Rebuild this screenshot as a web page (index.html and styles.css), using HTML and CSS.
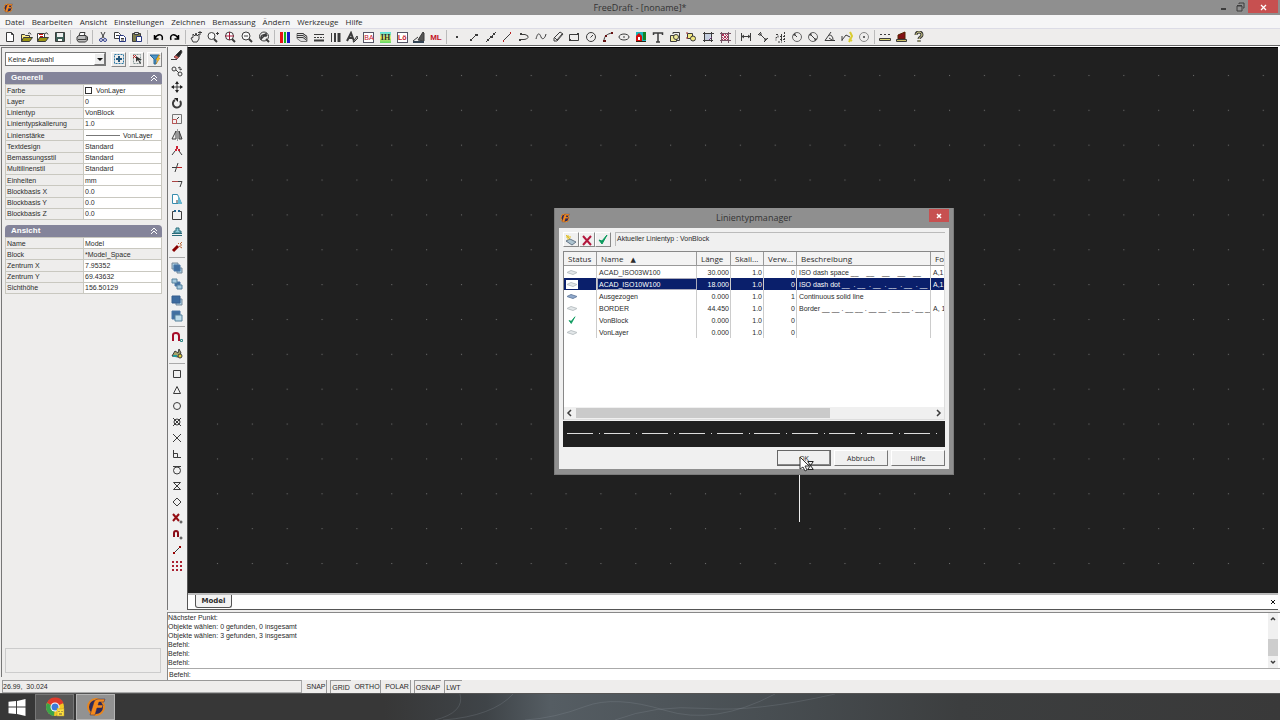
FILE: index.html
```html
<!DOCTYPE html>
<html lang="de">
<head>
<meta charset="utf-8">
<title>FreeDraft - [noname]*</title>
<link rel="stylesheet" href="styles.css">
</head>
<body>
<svg class="defs" aria-hidden="true">
  <symbol id="logo" viewBox="0 0 20 20"><circle cx="10" cy="10" r="8" fill="#2c2a5c" stroke="#e8861c" stroke-width="2"/><path d="M4 18L8 5q1-3 4-3h7l-1 3h-5l-1 3h5l-1 3h-5l-2 7z" fill="#f58a1c" stroke="#2c2a5c" stroke-width=".5"/></symbol>
  <symbol id="layer" viewBox="0 0 12 8"><path d="M1 4l4-2 6 2-4 2z" fill="#e3e7e9" stroke="#bcc3c6"/></symbol>
  <symbol id="layer-used" viewBox="0 0 12 8"><path d="M1 4l4-2 6 2-4 2z" fill="#8fa9cc" stroke="#6d84a5"/></symbol>
  <symbol id="tick" viewBox="0 0 12 12"><path d="M2 6l3 4 5-9-5 6z" fill="#0a9a5c" stroke="#0a9a5c"/></symbol>
  <symbol id="fold" viewBox="0 0 8 8"><path d="M1 4l3-3 3 3M1 7l3-3 3 3" fill="none" stroke="#fff"/></symbol>
</svg>

<header class="titlebar">
  <svg class="app-icon"><use href="#logo"/></svg>
  <h1>FreeDraft - [noname]*</h1>
  <div class="window-buttons">
    <button aria-label="Minimieren"><svg class="i" viewBox="0 0 12 12"><path d="M4 8h5" stroke-width="2"/></svg></button>
    <button aria-label="Wiederherstellen"><svg class="i" viewBox="0 0 12 12"><path d="M3 5h5v5H3zM3 4.500h5M5 3V2h5v5H9"/></svg></button>
    <button class="close" aria-label="Schließen"><svg class="i" viewBox="0 0 12 12"><path d="M4 4l5 5M9 4L4 9" stroke="#fff" stroke-width="1.300"/></svg></button>
  </div>
</header>

<nav class="menubar">
  <button>Datei</button><button>Bearbeiten</button><button>Ansicht</button><button>Einstellungen</button><button>Zeichnen</button><button>Bemassung</button><button>Ändern</button><button>Werkzeuge</button><button>Hilfe</button>
</nav>

<div class="toolbar" role="toolbar" aria-label="Werkzeugleiste">
  <div class="group file">
    <button aria-label="Neu"><svg class="i" viewBox="0 0 12 12"><path d="M2.500 1.500h5l2 2v7h-7zM7.500 1.500v2h2" fill="#fff"/></svg></button>
    <button aria-label="Öffnen"><svg class="i" viewBox="0 0 12 12"><path d="M.5 10.500v-7h3l1 1h4v2" fill="#ffef8a"/><path d="M.5 10.500l2-4h9l-3 4z" fill="#9a9412"/><path d="M7 2.500q2-2 3 1"/></svg></button>
    <button aria-label="Import"><svg class="i" viewBox="0 0 12 12"><path d="M.5 10.500v-8h7v4" fill="#fff"/><path d="M.5 10.500l2-4h9l-3 4z" fill="#9a9412"/><path d="M2 3.500h4M3 5.500h3" stroke="#c11"/><path d="M8 2.500q2-2 3 1"/></svg></button>
    <button aria-label="Speichern"><svg class="i" viewBox="0 0 12 12"><path d="M1.500 1.500h9v9h-9z" fill="#3e5f57"/><path d="M3 2h6v4H3z" fill="#eee" stroke="none"/><path d="M4 8h4v2H4z" fill="#fff" stroke="none"/></svg></button>
  </div>
  <div class="group one">
    <button aria-label="Drucken"><svg class="i" viewBox="0 0 12 12"><path d="M3 5l1-3.500h5L8 5" fill="#fff"/><path d="M1 8V6l2-1.500h7L11.500 6v3l-2 2h-7L1 9z" fill="#bbb"/><path d="M2 8.500h8M10 5v4"/></svg></button>
  </div>
  <div class="group three">
    <button aria-label="Ausschneiden"><svg class="i" viewBox="0 0 12 12"><path d="M4 1l3 6M8 1L5 7"/><g stroke="#33408f"><circle cx="4" cy="9" r="1.500"/><circle cx="8" cy="9" r="1.500"/></g></svg></button>
    <button aria-label="Kopieren"><svg class="i" viewBox="0 0 12 12"><path d="M.5 1.500h4l2 2v4h-6z" fill="#fff"/><path d="M5.500 4.500h4l2 2v4h-6z" fill="#fff" stroke="#26357f"/><path d="M2 4.500h3M7 7.500h3M7 9h3"/></svg></button>
    <button aria-label="Einfügen"><svg class="i" viewBox="0 0 12 12"><path d="M1.500 2.500h8v8h-8z" fill="#7e7c49"/><path d="M3.500 1.500h4v2h-4z" fill="#ddd"/><path d="M5.500 5.500h5v5h-5z" fill="#fff" stroke="#26357f"/></svg></button>
  </div>
  <div class="group two">
    <button aria-label="Rückgängig"><svg class="i" viewBox="0 0 12 12"><path d="M3 7c3-5 9-4 7 2M2.500 4v4h4" stroke="#000" stroke-width="1.500"/></svg></button>
    <button aria-label="Wiederholen"><svg class="i" viewBox="0 0 12 12"><path d="M9 7C6 2 0 3 2 9M9.500 4v4h-4" stroke="#000" stroke-width="1.500"/></svg></button>
  </div>
  <div class="group five">
    <button aria-label="Pan"><svg class="i" viewBox="0 0 12 12"><path d="M3 11L1 7l2-.5V3l2 2 1-3 1 3 2-2v5l-2 3zM8 1.500h4M10 0v4"/></svg></button>
    <button aria-label="Zoom"><svg class="i" viewBox="0 0 12 12"><circle cx="4.500" cy="5" r="3.500" fill="#f8f8f8"/><path d="M7 8l3 3" stroke-width="2"/><path d="M9 2.500h3M10.500 1v3"/></svg></button>
    <button aria-label="Zoom plus"><svg class="i" viewBox="0 0 12 12"><circle cx="5.500" cy="5" r="4" fill="#fff"/><path d="M8 8l3 3" stroke-width="2"/><path d="M1 5h9M5.500 1v8" stroke="#a11938"/></svg></button>
    <button aria-label="Zoom minus"><svg class="i" viewBox="0 0 12 12"><circle cx="5" cy="5" r="4" fill="#f8f8f8"/><path d="M8 8l3 3" stroke-width="2"/><path d="M3 5h4"/></svg></button>
    <button aria-label="Zoom alles"><svg class="i" viewBox="0 0 12 12"><circle cx="6" cy="5.500" r="4.500"/><path d="M8 8l3 3" stroke-width="2"/><path d="M3 9V6c1-3 5-3 6-1M3 8l3-3M8 2v3H5" stroke-width="1.500"/></svg></button>
  </div>
  <div class="group ten">
    <button aria-label="Farbe"><svg class="i" viewBox="0 0 12 12"><path d="M2.500 1v11" stroke="#e81212" stroke-width="3"/><path d="M6 1v11" stroke="#17b317" stroke-width="2"/><path d="M9.500 1v11" stroke="#1818c8" stroke-width="3"/></svg></button>
    <button aria-label="Layer"><svg class="i" viewBox="0 0 12 12"><path d="M1 2.500h6l4 3v5H5l-4-3z" fill="#ddd" stroke="#777"/><path d="M1 2.500h6l4 3M1 4.500h6l4 3M1 6.500h6l4 3"/></svg></button>
    <button aria-label="Linientyp"><svg class="i" viewBox="0 0 12 12"><path d="M1 3.500h10"/><path d="M1 6.500h10" stroke-dasharray="2 1"/><path d="M1 9.500h10" stroke-width="2"/></svg></button>
    <button aria-label="Linienstärke"><svg class="i" viewBox="0 0 12 12"><path d="M2.500 2v9"/><path d="M6 2v9" stroke-width="2"/><path d="M10 2v9" stroke-width="3"/></svg></button>
    <button aria-label="Textstil"><svg class="i" viewBox="0 0 12 12"><path d="M1 10l4-8 3 8M3 7h4" stroke-width="2"/><path d="M7 11l4-6 1 2-4 4z" fill="#bbb"/></svg></button>
    <button class="letter" aria-label="Bemassungsstil"><span class="red boxed">BA</span></button>
    <button class="letter" aria-label="Inhalt"><span class="rainbow">IH</span></button>
    <button class="letter" aria-label="Löschen"><span class="red boxed bold">Lö</span></button>
    <button aria-label="Schnellauswahl"><svg class="i" viewBox="0 0 12 12"><path d="M0 10l5-4M5 9l5-8 1 1v8z" fill="#555"/><path d="M0 11h11" stroke-width="2" stroke="#345"/></svg></button>
    <button class="letter" aria-label="Multilinie"><span class="red large">ML</span></button>
  </div>
  <div class="group draw">
    <button aria-label="Punkt"><svg class="i" viewBox="0 0 12 12"><path d="M5 6h2" stroke-width="2"/></svg></button>
    <button aria-label="Linie"><svg class="i" viewBox="0 0 12 12"><path d="M2 10l7-7"/><path d="M2 9h2M7 4h3" stroke-width="2"/></svg></button>
    <button aria-label="Strahl"><svg class="i" viewBox="0 0 12 12"><path d="M1 11L11 1"/><path d="M2 9h2M5 6h3M8 3h2" stroke-width="2"/></svg></button>
    <button aria-label="Konstruktionslinie"><svg class="i" viewBox="0 0 12 12"><path d="M2 10l8-8"/><path d="M2 10h1M9 2h1" stroke="#b22" stroke-width="2"/></svg></button>
    <button aria-label="Polylinie"><svg class="i" viewBox="0 0 12 12"><path d="M2 3.500h5q4 1 3 3t-4 2H1"/><path d="M1 9h2M2 3h2" stroke-width="2"/></svg></button>
    <button aria-label="Spline"><svg class="i" viewBox="0 0 12 12"><path d="M1 8c2-8 4-5 5-2s4 2 5-3"/></svg></button>
    <button aria-label="Bleistift"><svg class="i" viewBox="0 0 12 12"><path d="M2 10V7l6-6 3 2-6 7zM3 7l2 2 5-6"/></svg></button>
    <button aria-label="Rechteck"><svg class="i" viewBox="0 0 12 12"><path d="M1.500 3.500h9v6h-9z"/><path d="M1 9h2M9 3h2" stroke-width="2"/></svg></button>
    <button aria-label="Kreis"><svg class="i" viewBox="0 0 12 12"><circle cx="6" cy="6" r="4.500"/><path d="M5.500 6.500L8 4"/></svg></button>
    <button aria-label="Bogen"><svg class="i" viewBox="0 0 12 12"><path d="M2 10c0-5 3-7 8-8"/><path d="M1 10h3M3 5h2M9 2h2" stroke="#611" stroke-width="2"/></svg></button>
    <button aria-label="Ellipse"><svg class="i" viewBox="0 0 12 12"><ellipse cx="6" cy="6" rx="5" ry="3"/><path d="M5 6h2"/></svg></button>
    <button aria-label="Bild"><svg class="i" viewBox="0 0 12 12"><g stroke="none"><path d="M1 1h10v10H1z" fill="#18b8bd"/><path d="M1 10V5l3-3 3 3v5z" fill="#d40c0c"/><path d="M3 6h2v3H3z" fill="#fff"/><path d="M8 1h3v8H8z" fill="#128526"/><path d="M1 10h10v1H1z" fill="#321"/></g></svg></button>
    <button aria-label="Text"><svg class="i" viewBox="0 0 12 12"><path d="M1.500 4V2h9v2M6 2v9M4 11h4" stroke-width="1.500"/></svg></button>
    <button aria-label="Block einfügen"><svg class="i" viewBox="0 0 12 12"><path d="M1.500 4.500h6v6h-6z" fill="#efe999"/><path d="M4 3V1.500h6.500v8H8"/><circle cx="7" cy="6" r="2.500" fill="#efe999"/></svg></button>
    <button aria-label="Block"><svg class="i" viewBox="0 0 12 12"><path d="M2.500 2.500h5v5h-5z" fill="#f3e982"/><circle cx="8" cy="7.500" r="2.500" fill="#f3e982"/><path d="M1 2h2M1 7h2" stroke="#a33"/></svg></button>
    <button aria-label="Begrenzung"><svg class="i" viewBox="0 0 12 12"><path d="M3 3h6l-1 6H3z" fill="#c4cee0" stroke="none"/><path d="M2.500 1v10M9.500 1v10M1 2.500h11M1 9.500h10"/><path d="M7 9l3-3" stroke="#637"/></svg></button>
    <button aria-label="Schraffur"><svg class="i" viewBox="0 0 12 12"><path d="M2.500 1v11M9.500 1v11M1 2.500h11M1 9.500h11" stroke="#756"/><path d="M3 5l2-2M3 9l6-6M6 9l3-3M3 6l3 3M3 3l6 6M6 3l3 3" stroke="#b3355c"/></svg></button>
  </div>
  <div class="group eight">
    <button aria-label="Linear"><svg class="i" viewBox="0 0 12 12"><path d="M1.500 2v8M10.500 2v8M2 5.500h8M4 4L2 5.500 4 7M8 4l2 1.500L8 7"/></svg></button>
    <button aria-label="Ausgerichtet"><svg class="i" viewBox="0 0 12 12"><path d="M1 4l3-3M3 3l6 6M3 5V3h2M7 9h2V7M7 11l4-4"/></svg></button>
    <button aria-label="Koordinate"><svg class="i" viewBox="0 0 12 12"><path d="M2 3.500h2v3H2v3M6 5.500h6M6 8.500h6M7.500 3v7M10.500 1v10M4 11h4" stroke-dasharray="2 1"/></svg></button>
    <button aria-label="Radius"><svg class="i" viewBox="0 0 12 12"><circle cx="6" cy="6" r="4.500" stroke="#666"/><path d="M6 6L3 3M3 5V3h2"/></svg></button>
    <button aria-label="Durchmesser"><svg class="i" viewBox="0 0 12 12"><circle cx="6" cy="6" r="4.500" stroke="#666"/><path d="M3 3l6 6M3 5V3h2M9 7v2H7"/></svg></button>
    <button aria-label="Winkel"><svg class="i" viewBox="0 0 12 12"><path d="M7 1L1 9.500h10M5 4q4 0 4 5M5 7l3 2"/></svg></button>
    <button aria-label="Führung"><svg class="i" viewBox="0 0 12 12"><path d="M1 5v5M1 9l4-5 4 2"/><path d="M9 1l2 4-3 6M8 8l3 2" stroke="#d9cc31" stroke-width="2"/></svg></button>
    <button aria-label="Mittelpunkt"><svg class="i" viewBox="0 0 12 12"><circle cx="6" cy="6" r="4.500" stroke="#888"/><path d="M5 6h2M6 5v2"/></svg></button>
  </div>
  <div class="group last">
    <button aria-label="Abstand"><svg class="i" viewBox="0 0 12 12"><path d="M1 3.500h10" stroke-dasharray="2 2"/><path d="M.5 7.500h11v2H.5z" fill="#d9d46e"/></svg></button>
    <button aria-label="Fläche"><svg class="i" viewBox="0 0 12 12"><path d="M2 8V4l7-3v7z" fill="#820f16" stroke="#520"/><path d="M.5 8.500h10v2H.5z" fill="#cdc16b"/></svg></button>
    <button aria-label="Hilfe"><svg class="i" viewBox="0 0 12 12"><path d="M3 4c0-4 6-4 6 0 0 2-3 2-3 4M6 9v2" stroke-width="3"/><path d="M3 4c0-4 6-4 6 0 0 2-3 2-3 4M6 9v2" stroke="#ddd98f"/></svg></button>
  </div>
</div>

<main class="main">
  <aside class="properties">
    <div class="selection">
      <label class="combo"><select aria-label="Auswahl"><option>Keine Auswahl</option></select><span class="arrow"></span></label>
      <button class="raised" aria-label="Auswählen"><svg class="i" viewBox="0 0 12 12"><path d="M1.500 1.500h9v9h-9z" stroke="#2a77a5" stroke-dasharray="2 1"/><path d="M3 6h6M6 3v6" stroke-width="2" stroke="#25587d"/></svg></button>
      <button class="raised" aria-label="Abwählen"><svg class="i" viewBox="0 0 12 12"><path d="M2.500 1.500h7v9h-7z" stroke="#899" stroke-dasharray="2 1"/><path d="M2 2l3 3M5 2L2 5" stroke="#b22"/><path d="M5 3v6l2-2 2 4 1-1-2-3h3z" fill="#333" stroke="none"/></svg></button>
      <button class="raised" aria-label="Filter"><svg class="i" viewBox="0 0 12 12"><path d="M1 2h9L7 6v5H5V6z" fill="#4a96c8" stroke="#2b6696"/><path d="M10 2L7 7h2l-2 4 4-6H9l2-3z" fill="#ffca24" stroke="#bc8112" stroke-width=".5"/></svg></button>
    </div>
    <section class="general">
      <h2>Generell<svg><use href="#fold"/></svg></h2>
      <table>
        <tr><th>Farbe</th><td><span class="swatch"></span>VonLayer</td></tr>
        <tr><th>Layer</th><td>0</td></tr>
        <tr><th>Linientyp</th><td>VonBlock</td></tr>
        <tr><th>Linientypskalierung</th><td>1.0</td></tr>
        <tr><th>Linienstärke</th><td><span class="weight"></span>VonLayer</td></tr>
        <tr><th>Textdesign</th><td>Standard</td></tr>
        <tr><th>Bemassungsstil</th><td>Standard</td></tr>
        <tr><th>Multilinenstil</th><td>Standard</td></tr>
        <tr><th>Einheiten</th><td>mm</td></tr>
        <tr><th>Blockbasis X</th><td>0.0</td></tr>
        <tr><th>Blockbasis Y</th><td>0.0</td></tr>
        <tr><th>Blockbasis Z</th><td>0.0</td></tr>
      </table>
    </section>
    <section class="view">
      <h2>Ansicht<svg><use href="#fold"/></svg></h2>
      <table>
        <tr><th>Name</th><td>Model</td></tr>
        <tr><th>Block</th><td class="locked">*Model_Space</td></tr>
        <tr><th>Zentrum X</th><td>7.95352</td></tr>
        <tr><th>Zentrum Y</th><td>69.43632</td></tr>
        <tr><th>Sichthöhe</th><td>156.50129</td></tr>
      </table>
    </section>
    <div class="hint"></div>
  </aside>

  <div class="right">
    <div class="upper">
      <div class="strip" role="toolbar" aria-label="Ändern">
        <div class="vgroup">
          <button aria-label="Löschen"><svg class="i" viewBox="0 0 12 12"><path d="M0 10.500h6"/><path d="M3 8l2-2 3 2-2 2z" fill="#c65" stroke="#845"/><path d="M5 6l5-5 1 2-3 5z" fill="#222"/></svg></button>
          <button aria-label="Kopieren"><svg class="i" viewBox="0 0 12 12"><circle cx="3" cy="4" r="2"/><circle cx="9" cy="9" r="2"/><path d="M5 5l3 3M7 3l2-1v3l2-1"/></svg></button>
          <button aria-label="Verschieben"><svg class="i" viewBox="0 0 12 12"><path d="M6 1v10M1 6h10"/><path d="M6 0l2 3H4zM6 12l2-3H4zM0 6l3-2v4zM12 6L9 4v4z" fill="#222" stroke="none"/></svg></button>
          <button aria-label="Drehen"><svg class="i" viewBox="0 0 12 12"><path d="M4 3a4 4 0 1 0 5 1" stroke-width="2"/><path d="M3 1h4v4z" fill="#222" stroke="none"/></svg></button>
          <button aria-label="Skalieren"><svg class="i" viewBox="0 0 12 12"><path d="M1.500 1.500h9v9h-9z" stroke="#777"/><path d="M1.500 6.500h4v4h-4z" stroke="#b55"/><path d="M6 6l2-2"/></svg></button>
          <button aria-label="Spiegeln"><svg class="i" viewBox="0 0 12 12"><path d="M5 2v8H1z"/><path d="M8 2v8h3z" fill="#aaa"/><path d="M6.500 0v12" stroke="#999"/></svg></button>
          <button aria-label="Brechen"><svg class="i" viewBox="0 0 12 12"><path d="M1 10l3-4M8 6l3 4"/><path d="M4 5h2M7 5h2M6 1v3" stroke="#c23" stroke-width="2"/></svg></button>
          <button aria-label="Stutzen"><svg class="i" viewBox="0 0 12 12"><path d="M1 6.500h5M4 11l3-9"/><path d="M6 6.500h5" stroke="#b22"/></svg></button>
          <button aria-label="Dehnen"><svg class="i" viewBox="0 0 12 12"><path d="M1 4.500h6" stroke="#a44"/><path d="M7 4.500h4L9 10"/></svg></button>
          <button aria-label="Strecken"><svg class="i" viewBox="0 0 12 12"><path d="M1.500 1.500h5l4 9h-9z" fill="#fff" stroke="#388dae"/><path d="M7 2l4 9H7z" fill="#66b8d2" stroke="none"/><path d="M6 7v3"/></svg></button>
          <button aria-label="Öffnen"><svg class="i" viewBox="0 0 12 12"><path d="M4 2.500H1.500v8h9v-8H8"/><path d="M3 2h2M7 2h2" stroke="#23638d" stroke-width="2"/></svg></button>
          <button aria-label="Stempel"><svg class="i" viewBox="0 0 12 12"><path d="M1 10.500h10M1 8.500h10M3 8V6h2V3h3v3h2v2z" fill="#8bcad7" stroke="#286b79"/></svg></button>
          <button aria-label="Auflösen"><svg class="i" viewBox="0 0 12 12"><path d="M2 10l5-5" stroke="#800" stroke-width="3"/><path d="M7 3l1-1M9 4h2M8 5l3 2M9 3l2-2" stroke="#b63"/></svg></button>
        </div>
        <div class="vgroup">
          <button aria-label="Nach vorne"><svg class="i" viewBox="0 0 12 12"><path d="M1 1h6v6H1zM6 6h5v5H6z" fill="#a4c9df" stroke="#789"/><path d="M3 3h6v6H3z" fill="#416fa0" stroke="#4a79a8"/></svg></button>
          <button aria-label="Nach hinten"><svg class="i" viewBox="0 0 12 12"><path d="M4 4h5v4H4z" fill="#416fa0" stroke="#4a79a8"/><path d="M1 1h5v4H1zM6 7h5v4H6z" fill="#a4c9df" stroke="#57829d"/></svg></button>
          <button aria-label="Über Objekt"><svg class="i" viewBox="0 0 12 12"><path d="M5 5h6v6H5z" fill="#a4c9df" stroke="#789"/><path d="M1 2h8v7H1z" fill="#3c6b9f" stroke="#365f8e"/></svg></button>
          <button aria-label="Unter Objekt"><svg class="i" viewBox="0 0 12 12"><path d="M1 1h8v8H1z" fill="#416fa0" stroke="#4a79a8"/><path d="M4 5h7v6H4z" fill="#bddbea" stroke="#57829d"/></svg></button>
        </div>
        <div class="vgroup">
          <button aria-label="Fang"><svg class="i" viewBox="0 0 12 12"><path d="M2 10V4q0-2 3-2 3 0 3 3v5" stroke="#a60d28" stroke-width="2"/><path d="M9.500 8.500h2v2h-2z" stroke="#388"/></svg></button>
          <button aria-label="Fang-Einstellungen"><svg class="i" viewBox="0 0 12 12"><path d="M1 9l3-5 3 2 1-4 2 4-3 4z" fill="#a8a468"/><circle cx="9" cy="9" r="2" fill="#e2ce37"/><path d="M2 9h4" stroke="#299" stroke-width="2"/></svg></button>
        </div>
        <div class="vgroup">
          <button aria-label="Endpunkt"><svg class="i" viewBox="0 0 12 12"><path d="M2.500 2.500h7v7h-7z"/></svg></button>
          <button aria-label="Mitte"><svg class="i" viewBox="0 0 12 12"><path d="M6 2.500l3.500 7h-7z"/></svg></button>
          <button aria-label="Zentrum"><svg class="i" viewBox="0 0 12 12"><circle cx="6" cy="6" r="3.500"/></svg></button>
          <button aria-label="Knoten"><svg class="i" viewBox="0 0 12 12"><circle cx="6" cy="6" r="3"/><path d="M2 2l8 8M10 2l-8 8"/></svg></button>
          <button aria-label="Schnittpunkt"><svg class="i" viewBox="0 0 12 12"><path d="M2 2l8 8M10 2l-8 8"/></svg></button>
          <button aria-label="Lot"><svg class="i" viewBox="0 0 12 12"><path d="M2.500 2v7.500H10M2.500 5.500h4v4"/></svg></button>
          <button aria-label="Tangente"><svg class="i" viewBox="0 0 12 12"><path d="M2 2.500h8"/><circle cx="6" cy="6.500" r="3.500"/></svg></button>
          <button aria-label="Nächster"><svg class="i" viewBox="0 0 12 12"><path d="M2.500 2.500h7l-7 7h7z"/></svg></button>
          <button aria-label="Quadrant"><svg class="i" viewBox="0 0 12 12"><path d="M6 2l4 4-4 4-4-4z"/></svg></button>
          <button aria-label="Kein Fang"><svg class="i" viewBox="0 0 12 12"><path d="M2 2l6 7M8 2L2 9" stroke="#940d13" stroke-width="2"/><circle cx="10" cy="10" r="1"/></svg></button>
          <button aria-label="Magnet"><svg class="i" viewBox="0 0 12 12"><path d="M3 9V5q0-2 2-2t2 2v4" stroke="#8b0d18" stroke-width="2"/><circle cx="10" cy="10" r="1"/></svg></button>
          <button aria-label="Spur"><svg class="i" viewBox="0 0 12 12"><path d="M3 9l5-5"/><path d="M2 9h2M8 3h2" stroke="#900" stroke-width="2"/></svg></button>
          <button aria-label="Raster"><svg class="i" viewBox="0 0 12 12"><path d="M1 2h10M1 6h10M1 10h10" stroke="#a92131" stroke-width="2" stroke-dasharray="2 2"/></svg></button>
        </div>
      </div>
      <div class="document">
        <div class="canvas">
          <svg class="grid-dots" aria-hidden="true">
            <defs><pattern id="dots" x="12" y="10" width="34.86" height="34.86" patternUnits="userSpaceOnUse"><rect x="17" y="17" width="1" height="1" fill="#777"/></pattern></defs>
            <rect width="100%" height="100%" fill="url(#dots)"/>
            <path d="M611.500 420v54" stroke="#eee" fill="none"/>
          </svg>
        </div>
        <div class="tabs"><button class="tab">Model</button><button class="tab-close" aria-label="Schließen"><svg class="i" viewBox="0 0 8 8"><path d="M2 2l4 4M6 2L2 6"/></svg></button></div>
      </div>
    </div>
    <div class="command">
      <div class="log">
        <div class="lines"><p>Nächster Punkt:</p><p>Objekte wählen: 0 gefunden, 0 insgesamt</p><p>Objekte wählen: 3 gefunden, 3 insgesamt</p><p>Befehl:</p><p>Befehl:</p><p>Befehl:</p></div>
        <div class="vscroll"><svg class="i" viewBox="0 0 8 8"><path d="M2 5l2-2 2 2" stroke-width="1.500"/></svg><span></span><svg class="i" viewBox="0 0 8 8"><path d="M2 3l2 2 2-2" stroke-width="1.500"/></svg></div>
      </div>
      <div class="prompt"><label for="cmd">Befehl:</label><input id="cmd" type="text"></div>
    </div>
  </div>
</main>

<footer class="status">
  <div class="coords">26.99,&nbsp; 30.024</div>
  <button>SNAP</button><button class="on">GRID</button><button class="wide">ORTHO</button><button class="wide">POLAR</button><button class="on wide">OSNAP</button><button class="on narrow">LWT</button>
</footer>

<div class="taskbar">
  <svg class="smoke" viewBox="0 0 640 27" preserveAspectRatio="none" aria-hidden="true"><g fill="none" stroke="#8b969c" stroke-opacity=".25"><path d="M0 27q30-8 25-27M8 27q50-4 70-27M90 27q30-2 60-14t80 4 110-17M180 27q40-16 90-12t130-15"/></g></svg>
  <button class="start" aria-label="Start"><svg viewBox="0 0 18 18"><path d="M0 3l8-1v6H0zM9 2l9-2v8H9zM0 9h8v7l-8-1zM9 9h9v9l-9-2z" fill="#fff"/></svg></button>
  <button class="task" aria-label="Chrome"><svg viewBox="0 0 20 20"><circle cx="10" cy="10" r="9" fill="#f4c724"/><path d="M10 10L2 6a9 9 0 0 1 16.500 0z" fill="#df3b2c"/><path d="M10 10L2 6a9 9 0 0 0 7 13z" fill="#3ba34b"/><circle cx="10" cy="10" r="4.500" fill="#fff"/><circle cx="10" cy="10" r="3.500" fill="#3d7bd9"/><path d="M12 11l2 1h3l2-1v8h-7z" fill="#ffe13e" stroke="#b7952c" stroke-width=".5"/><path d="M14 14v1M17 14v1M14 17h3" stroke="#654"/></svg></button>
  <button class="task active" aria-label="FreeDraft"><svg><use href="#logo"/></svg></button>
</div>

<div class="dialog" role="dialog" aria-labelledby="dlg-title">
  <div class="dlg-title"><svg class="app-icon"><use href="#logo"/></svg><h2 id="dlg-title">Linientypmanager</h2><button class="dlg-close" aria-label="Schließen"><svg class="i" viewBox="0 0 12 12"><path d="M4 4l4 4M8 4L4 8" stroke="#fff" stroke-width="1.500"/></svg></button></div>
  <div class="dlg-body">
    <div class="dlg-tools">
      <button class="raised" aria-label="Neu"><svg class="i" viewBox="0 0 12 12"><path d="M1 7l4-2 6 3-4 3z" fill="#adc3cf" stroke="#678"/><path d="M3 1v5M1 3h5M1 1l4 4" stroke="#dfbd25"/></svg></button>
      <button class="raised" aria-label="Löschen"><svg class="i" viewBox="0 0 12 12"><path d="M2 2l8 9M10 2L2 11" stroke="#b3173c" stroke-width="2"/></svg></button>
      <button class="raised" aria-label="Aktuell"><svg class="i"><use href="#tick"/></svg></button>
      <div class="current">Aktueller Linientyp : VonBlock</div>
    </div>
    <div class="list">
      <table>
        <colgroup><col class="c-status"><col class="c-name"><col class="c-len"><col class="c-num"><col class="c-num"><col class="c-desc"><col></colgroup>
        <thead><tr><th>Status</th><th>Name<span class="sort">▲</span></th><th>Länge</th><th>Skali...</th><th>Verw...</th><th>Beschreibung</th><th>Fo</th></tr></thead>
        <tbody>
          <tr><td><svg><use href="#layer"/></svg></td><td>ACAD_ISO03W100</td><td>30.000</td><td>1.0</td><td>0</td><td>ISO dash space __ &nbsp; &nbsp;__ &nbsp; &nbsp;__ &nbsp; &nbsp;__ &nbsp; &nbsp;__</td><td>A,1</td></tr>
          <tr class="selected"><td><svg><use href="#layer"/></svg></td><td>ACAD_ISO10W100</td><td>18.000</td><td>1.0</td><td>0</td><td>ISO dash dot __ &nbsp;. __ &nbsp;. __ &nbsp;. __ &nbsp;. __ &nbsp;. __</td><td>A,1</td></tr>
          <tr><td><svg><use href="#layer-used"/></svg></td><td>Ausgezogen</td><td>0.000</td><td>1.0</td><td>1</td><td>Continuous solid line</td><td></td></tr>
          <tr><td><svg><use href="#layer"/></svg></td><td>BORDER</td><td>44.450</td><td>1.0</td><td>0</td><td>Border __ __ . __ __ . __ __ . __ __ . __ __</td><td>A, 1</td></tr>
          <tr><td><svg><use href="#tick"/></svg></td><td>VonBlock</td><td>0.000</td><td>1.0</td><td>0</td><td></td><td></td></tr>
          <tr><td><svg><use href="#layer"/></svg></td><td>VonLayer</td><td>0.000</td><td>1.0</td><td>0</td><td></td><td></td></tr>
        </tbody>
      </table>
      <div class="hscroll"><svg class="i" viewBox="0 0 8 8"><path d="M5 1L2 4l3 3" stroke-width="1.500"/></svg><div class="track"><span></span></div><svg class="i" viewBox="0 0 8 8"><path d="M3 1l3 3-3 3" stroke-width="1.500"/></svg></div>
    </div>
    <svg class="preview" aria-hidden="true"><path d="M4 12.500h374" stroke="#ddd" stroke-dasharray="26 6 1 4 26 6 1 5"/></svg>
    <div class="actions"><button class="default">OK</button><button>Abbruch</button><button>Hilfe</button></div>
  </div>
</div>
<svg class="pointer" viewBox="0 0 18 18" aria-hidden="true"><path d="M1 1v12l3-2 2 4 2-1-2-4h4z" fill="#fff" stroke="#333"/><path d="M8.500 5.500h6M8.500 13.500h6M9 6l5 7M14 6l-5 7" fill="none" stroke="#222"/></svg>
</body>
</html>
```
FILE: styles.css
```css
* { box-sizing: border-box; }
html, body { height: 100%; }
body {
  margin: 0;
  display: flex;
  flex-direction: column;
  background: #eeedec;
  color: #2b2b2b;
  font: 7px/9px "Liberation Sans", Arial, sans-serif;
  overflow: hidden;
  position: relative;
}
h1, h2, p { margin: 0; font-weight: normal; }
button { font: inherit; color: inherit; background: none; border: 0; padding: 0; margin: 0; display: flex; align-items: center; justify-content: center; }
svg { display: block; flex: none; }
table { border-collapse: collapse; table-layout: fixed; width: 100%; }
th { font-weight: normal; text-align: left; }
.defs { position: absolute; width: 0; height: 0; }
.i { width: 12px; height: 12px; fill: none; stroke: #3c3c3c; }

.titlebar { height: 15px; flex: none; background: #8f8f8f; display: grid; grid-template-columns: 1fr auto 1fr; align-items: center; padding: 0 2px; }
.titlebar h1 { font: 9px/15px "Open Sans", sans-serif; color: #333; }
.app-icon { width: 10px; height: 10px; margin-left: 1px; }
.window-buttons { display: flex; justify-content: flex-end; align-self: start; }
.window-buttons button { width: 17px; height: 13px; }
.window-buttons .close { width: 30px; background: #c75050; }

.menubar { height: 14px; flex: none; display: flex; gap: 7px; padding-left: 5px; background: #f5f5f6; border-bottom: 1px solid #dcdce6; font: 8px/13px "Open Sans", sans-serif; }

.toolbar { height: 17px; flex: none; display: flex; align-items: center; gap: 2px; padding-left: 2px; border-bottom: 1px solid #666; }
.group { display: grid; grid-auto-flow: column; grid-auto-columns: minmax(0, 1fr); box-sizing: content-box; height: 14px; align-items: center; border-left: 1px solid #bbb; padding-left: 2px; }
.group.file { border: 0; padding: 0; width: 66px; }
.one { width: 17px; }
.two { width: 33px; }
.three, .last { width: 50px; }
.five { width: 84px; }
.ten { width: 167px; }
.draw { width: 284px; }
.eight { width: 134px; }
.letter span { font: 7px/11px "Liberation Sans", sans-serif; width: 11px; height: 11px; text-align: center; }
.letter .red { color: #c3121f; }
.letter .boxed { border: 1px solid #556; line-height: 9px; background: #fff; }
.letter .bold { font-weight: bold; }
.letter .rainbow { font: bold 8px/11px "Liberation Serif", serif; background: linear-gradient(#4de0e6, #e9ee6a, #5fdb67); }
.letter .large { font: bold 8px/11px "Liberation Sans", sans-serif; }

.main { flex: 1; min-height: 0; display: flex; gap: 2px; }
.properties { width: 165px; flex: none; margin: 1px 0 3px 1px; padding: 3px 3px 4px; border: solid #777; border-width: 1px 0 0 1px; display: flex; flex-direction: column; }
.selection { display: flex; align-items: center; gap: 3px; height: 16px; margin-bottom: 5px; }
.combo { position: relative; width: 101px; height: 14px; margin-right: 2px; }
.combo select { appearance: none; width: 100%; height: 100%; border: 1px solid #777; border-radius: 0; background: #fff; font: inherit; color: inherit; padding: 0 2px; }
.arrow { position: absolute; right: 1px; top: 1px; width: 11px; height: 12px; background: #eee; border: 1px solid; border-color: #fff #777 #777 #fff; pointer-events: none; }
.arrow::after { content: ""; position: absolute; left: 2px; top: 4px; border: 3px solid transparent; border-top-color: #111; border-bottom: 0; }
.raised { width: 15px; height: 15px; border: 1px solid; border-color: #fff #888 #888 #fff; }
.properties section { width: 157px; }
.properties h2 { display: flex; align-items: center; justify-content: space-between; height: 12px; padding: 0 4px 0 6px; background: #84849a; color: #fff; font: bold 8px/12px "Liberation Sans", sans-serif; border-radius: 4px 4px 0 0; }
.properties h2 svg { width: 8px; height: 8px; }
.general table { height: 136px; }
.view { margin-top: 5px; }
.view table { height: 57px; }
.properties th, .properties td { border: 1px solid #c9c8c0; padding: 0 1px; line-height: 9px; white-space: nowrap; }
.properties td { background: #fff; }
.properties td.locked { background: #eeedec; }
.swatch { display: inline-block; width: 7px; height: 7px; border: 1px solid #333; margin-right: 4px; vertical-align: -1px; }
.weight { display: inline-block; width: 34px; height: 1px; background: #777; margin: 0 3px 2px 1px; }
.hint { height: 25px; width: 156px; margin-top: auto; border: 1px solid #ccc; }

.right { flex: 1; min-width: 0; display: flex; flex-direction: column; margin-left: -1px; }
.upper { flex: 1; min-height: 0; display: flex; }
.strip { width: 20px; flex: none; border-left: 1px solid #777; margin-top: 1px; background: #f1f1f1; }
.vgroup { margin: 0 2px 0 1px; }
.vgroup + .vgroup { border-top: 1px solid #aaa; margin-top: 2px; padding-top: 2px; }
.vgroup button { width: 16px; height: 16px; }
.document { flex: 1; min-width: 0; display: flex; flex-direction: column; border: solid #fff; border-width: 1px 2px 0 0; border-left: 1px solid #555; }
.canvas { flex: 1; min-height: 0; background: #202020; border-top: 1px solid #000; }
.grid-dots { width: 100%; height: 100%; }
.tabs { height: 17px; flex: none; display: flex; justify-content: space-between; align-items: flex-start; background: #fff; border-top: 2px solid #bbb; border-bottom: 1px solid #555; padding-left: 7px; }
.tab { width: 37px; height: 13px; background: #f3f3f3; border: 1px solid #555; border-top: 0; border-radius: 0 0 3px 3px; font: bold 7px/12px "DejaVu Sans", sans-serif; }
.tab-close { width: 10px; height: 13px; }
.tab-close .i { width: 8px; height: 8px; stroke: #111; }

.command { flex: none; margin-top: 2px; background: #fff; border: solid #888; border-width: 1px 0 0 1px; }
.log { display: flex; justify-content: space-between; height: 55px; padding-right: 2px; }
.vscroll { width: 10px; display: flex; flex-direction: column; align-items: center; justify-content: space-between; background: #f0f0f0; padding: 2px 0; }
.vscroll span { width: 10px; height: 17px; margin-top: 14px; background: #cdcdcd; }
.vscroll svg { width: 8px; height: 8px; }
.prompt { display: flex; align-items: center; height: 12px; border-top: 1px solid #aaa; padding: 0 0 1px 1px; }
.prompt input { flex: 1; border: 0; padding: 0 2px; font: inherit; height: 9px; outline: 0; }

.status { height: 13px; flex: none; display: flex; align-items: stretch; gap: 3px; padding-left: 2px; }
.coords { width: 300px; border: 1px solid; border-color: #999 #aaa #aaa #999; margin-right: 1px; line-height: 11px; }
.status button { width: 21px; border-right: 1px solid #999; }
.status .wide { width: 27px; }
.status .narrow { width: 18px; }
.status .on { border: solid #999; border-width: 1px 0 0 1px; }

.taskbar { height: 27px; flex: none; display: flex; gap: 2px; background: linear-gradient(90deg, #373737 30%, #3f4448 38%, #555d63 43%, #484e52 60%, #3c3e3f 75%, #393939); border-top: 1px solid #555; position: relative; }
.smoke { position: absolute; left: 34%; top: 0; width: 50%; height: 100%; }
.start { width: 33px; }
.start svg { width: 18px; height: 17px; }
.task { width: 39px; background: #575757; border: 1px solid #777; }
.task svg { width: 20px; height: 20px; }
.task.active { background: #929292; border-color: #b5b5b5; }

.dialog { position: absolute; left: 554px; top: 208px; width: 400px; background: #8f8f8f; padding: 0 4px 5px; border: 1px solid #7b7b7b; border-top: 0; }
.dlg-title { display: grid; grid-template-columns: 1fr auto 1fr; align-items: center; height: 20px; }
.dlg-title h2 { font: 9px/20px "Open Sans", sans-serif; color: #333; }
.dlg-close { justify-self: end; align-self: start; margin-top: 1px; width: 20px; height: 13px; background: #c75050; }
.dlg-body { background: #f0f0f0; padding: 4px 4px 3px; }
.dlg-tools { display: flex; height: 16px; }
.dlg-tools .raised { width: 16px; }
.current { flex: 1; margin-left: 4px; height: 14px; border: solid #bbb; border-width: 1px 0 0 1px; line-height: 11px; padding-left: 1px; }
.list { margin-top: 3px; height: 169px; background: #fff; border: 1px solid #888; border-right-color: #ddd; border-bottom-color: #ddd; display: flex; flex-direction: column; justify-content: space-between; overflow: hidden; }
.c-status { width: 33px; }
.c-name { width: 100px; }
.c-len { width: 34px; }
.c-num { width: 33px; }
.c-desc { width: 134px; }
.list table { border-collapse: separate; border-spacing: 0; }
.list th { font: 8px/12px "Open Sans", sans-serif; height: 14px; padding: 0 0 0 4px; background: #f3f3f3; border-right: 1px solid #999; border-bottom: 1px solid #999; white-space: nowrap; overflow: hidden; }
.list th:last-child, .list td:last-child { border-right: 0; }
.list td { height: 12px; line-height: 11px; padding: 0 1px 0 2px; border-right: 1px solid #ccc; white-space: nowrap; overflow: hidden; }
.list td:nth-child(3), .list td:nth-child(4), .list td:nth-child(5) { text-align: right; }
.list td svg { width: 12px; height: 9px; }
.sort { font: 7px/9px "DejaVu Sans", sans-serif; margin-left: 7px; }
.selected td { background: #0a1f6b; color: #fff; }
.selected td svg { background: #fff; }
.selected td:nth-child(2) { outline: 1px solid #aab; outline-offset: -1px; }
.hscroll { display: flex; align-items: center; height: 12px; background: #f0f0f0; padding: 0 2px; }
.hscroll svg { width: 8px; height: 8px; }
.track { flex: 1; padding-left: 2px; }
.track span { display: block; width: 71%; height: 10px; background: #cacaca; }
.preview { width: 100%; height: 26px; margin-top: 1px; background: #202020; }
.actions { display: flex; justify-content: flex-end; gap: 3px; margin-top: 3px; font: 7px/9px "Open Sans", sans-serif; }
.actions button { width: 54px; height: 16px; border: 1px solid; border-color: #fff #777 #777 #fff; }
.actions .default { border-color: #666; box-shadow: inset -1px -1px #888; }
.pointer { position: absolute; left: 799px; top: 456px; width: 18px; height: 18px; }
```
